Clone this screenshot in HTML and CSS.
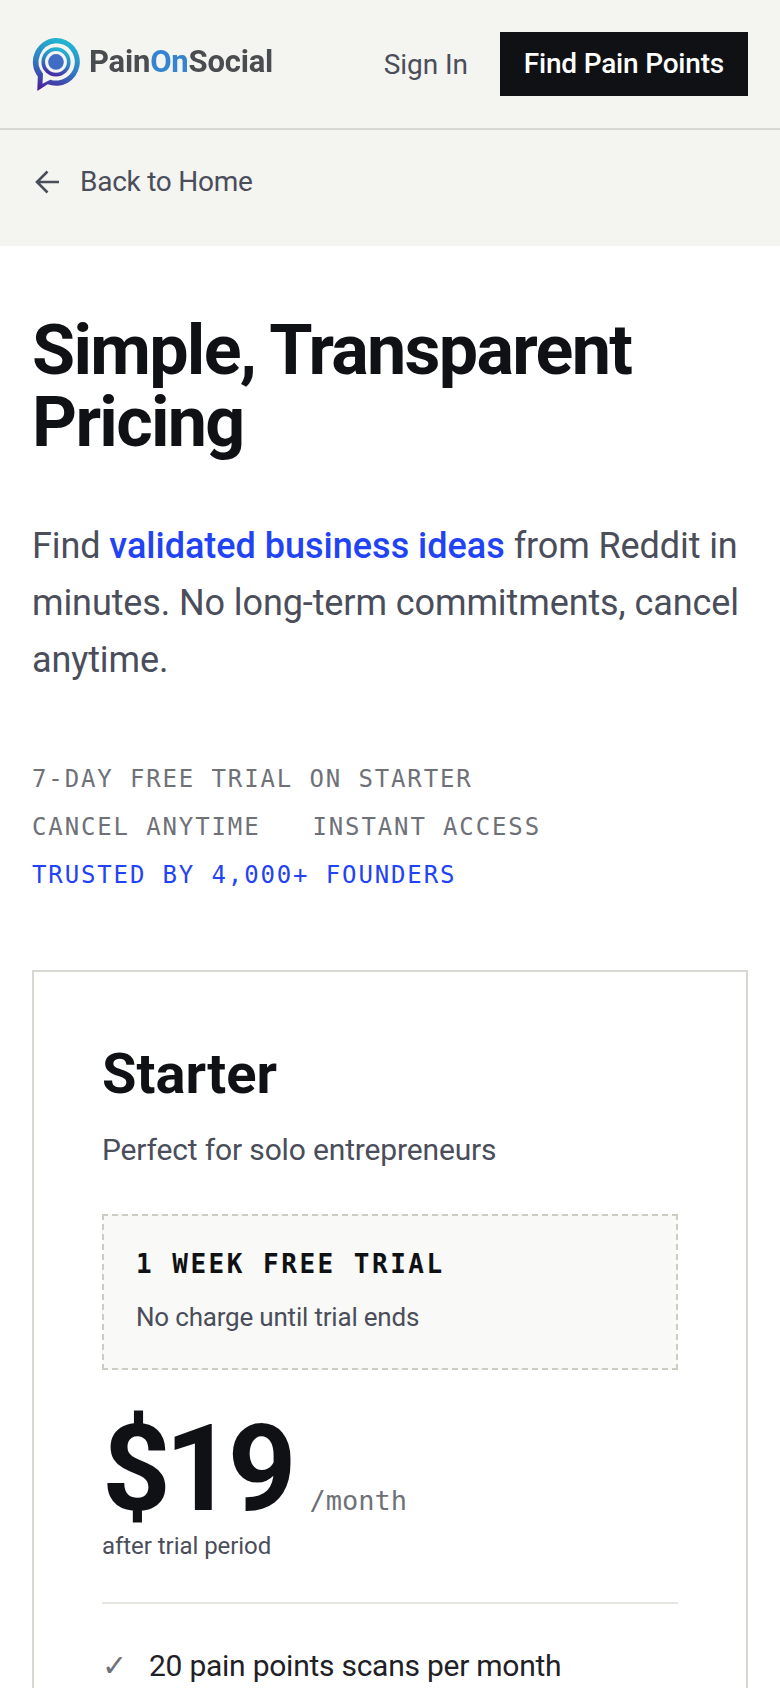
FILE: index.html
```html
<!DOCTYPE html>
<html lang="en">
<head>
  <meta charset="UTF-8" />
  <title>Pricing - PainOnSocial</title>
  <link rel="stylesheet" href="styles.css">
</head>
<body>
  <header class="topbar">
    <a class="logo" href="#">
      <svg class="logo-mark" width="48" height="53" viewBox="2 2 46 51">
        <defs>
          <linearGradient id="logoGrad" x1="0.6" y1="0" x2="0.3" y2="1">
            <stop offset="0" stop-color="#22b8d2" />
            <stop offset="0.5" stop-color="#2f7fc4" />
            <stop offset="1" stop-color="#4b1f9e" />
          </linearGradient>
        </defs>
        <path d="M25 2a23 23 0 1 1-8 44.600L7 53l0.500-14A23 23 0 0 1 25 2z" fill="url(#logoGrad)" />
        <path d="M25 7a18 18 0 1 1-5.500 35.100L12 46l0.500-9.500A18 18 0 0 1 25 7z" fill="#f4f4f0" />
        <circle cx="25" cy="25" r="14" fill="url(#logoGrad)" />
        <circle cx="25" cy="25" r="10.500" fill="#f4f4f0" />
        <circle cx="25" cy="25" r="7.500" fill="#3f6cc4" />
      </svg>
      <span class="logo-text">Pain<span class="logo-on">On</span>Social</span>
    </a>
    <nav class="topnav">
      <a class="signin" href="#">Sign In</a>
      <a class="find-btn" href="#">Find Pain Points</a>
    </nav>
  </header>

  <div class="backbar">
    <a class="back-link" href="#">
      <svg width="24" height="24" viewBox="0 0 24 24" fill="none" stroke="currentColor" stroke-width="2.6">
        <path d="M24 12H3M12.500 1.500L2 12l10.500 10.500" />
      </svg>
      Back to Home
    </a>
  </div>

  <main class="content">
    <h1>Simple, Transparent Pricing</h1>
    <p class="lead">Find <strong>validated business ideas</strong> from Reddit in minutes. No long-term commitments, cancel anytime.</p>

    <ul class="facts">
      <li>7-day free trial on Starter</li>
      <li>Cancel anytime</li>
      <li>Instant access</li>
      <li class="fact-blue">Trusted by 4,000+ founders</li>
    </ul>

    <section class="plan">
      <h2>Starter</h2>
      <p class="plan-desc">Perfect for solo entrepreneurs</p>
      <div class="trial">
        <div class="trial-title">1 Week Free Trial</div>
        <div class="trial-note">No charge until trial ends</div>
      </div>
      <div class="price">
        <span class="amount">$19</span>
        <span class="per">/month</span>
      </div>
      <p class="after">after trial period</p>
      <ul class="features">
        <li><span class="check">✓</span>20 pain points scans per month</li>
      </ul>
    </section>
  </main>
</body>
</html>
```

FILE: styles.css
```css
* {
  box-sizing: border-box;
}

html, body {
  height: 1688px;
  overflow: hidden;
}

body {
  margin: 0;
  font-family: Roboto, 'Noto Sans', sans-serif;
  background-color: #fff;
  color: #0f1114;
}

a {
  color: inherit;
  text-decoration: none;
}

ul {
  list-style: none;
  margin: 0;
  padding: 0;
}

.topbar {
  display: flex;
  align-items: center;
  justify-content: space-between;
  height: 130px;
  padding: 0 32px;
  background-color: #f4f4f0;
  border-bottom: 2px solid #d8d8d2;
}

.logo {
  display: flex;
  align-items: center;
  gap: 9px;
}

.logo-mark {
  display: block;
}

.logo-text {
  margin-bottom: 6px;
  font-size: 31px;
  font-weight: 700;
  letter-spacing: -0.2px;
  color: #4a4d50;
  filter: blur(0.5px);
}

.logo-on {
  color: #3484cf;
}

.topnav {
  display: flex;
  align-items: center;
  gap: 32px;
}

.signin {
  font-size: 28px;
  letter-spacing: -0.1px;
  color: #4a4d5a;
}

.find-btn {
  display: block;
  padding: 0 24px;
  line-height: 64px;
  font-size: 28px;
  font-weight: 500;
  letter-spacing: -0.2px;
  color: #fff;
  background-color: #0f1114;
}

.backbar {
  height: 116px;
  padding: 32px 32px 0;
  background-color: #f4f4f0;
}

.back-link {
  display: flex;
  align-items: center;
  gap: 21px;
  font-size: 28px;
  line-height: 40px;
  letter-spacing: -0.25px;
  color: #4a4d5a;
}

.back-link svg {
  margin-left: 3px;
}

.content {
  padding: 68px 32px 0;
}

h1 {
  margin: 0 0 60px;
  font-size: 70px;
  line-height: 72px;
  font-weight: 700;
  letter-spacing: -1.7px;
  color: #0f1114;
}

.lead {
  margin: 0 0 74px;
  font-size: 36px;
  line-height: 57px;
  letter-spacing: -0.1px;
  color: #4a4d5a;
}

.lead strong {
  font-weight: 500;
  letter-spacing: 0;
  color: #1f43f5;
}

.facts {
  display: flex;
  flex-wrap: wrap;
  gap: 16px 52px;
  margin-bottom: 79px;
  font-family: 'DejaVu Sans Mono', monospace;
  font-size: 24px;
  line-height: 32px;
  letter-spacing: 1.87px;
  text-transform: uppercase;
  color: #6f7178;
}

.facts li:first-child {
  width: 100%;
}

.facts .fact-blue {
  width: 100%;
  color: #1f43f5;
}

.plan {
  padding: 66px 68px;
  border: 2px solid #d8d8d2;
}

h2 {
  margin: 0 0 16px;
  font-size: 56px;
  line-height: 72px;
  font-weight: 700;
}

.plan-desc {
  margin: 0 0 40px;
  font-size: 30px;
  line-height: 48px;
  letter-spacing: -0.15px;
  color: #4a4d5a;
}

.trial {
  padding: 30px 32px 31px;
  background-color: #f9f9f7;
  border: 2px dashed #cccbc4;
}

.trial-title {
  font-family: 'DejaVu Sans Mono', monospace;
  font-size: 26px;
  font-weight: 700;
  line-height: 36px;
  letter-spacing: 2.5px;
  text-transform: uppercase;
}

.trial-note {
  margin-top: 15px;
  font-size: 26px;
  line-height: 40px;
  letter-spacing: -0.2px;
  color: #4a4d5a;
}

.price {
  display: flex;
  align-items: baseline;
  gap: 19px;
  margin-top: 39px;
}

.amount {
  font-size: 120px;
  line-height: 120px;
  font-weight: 700;
  letter-spacing: -6px;
}

.per {
  font-family: 'DejaVu Sans Mono', monospace;
  font-size: 27px;
  line-height: 40px;
  color: #6f7178;
}

.after {
  margin: 1px 0 0;
  font-size: 24px;
  line-height: 32px;
  letter-spacing: -0.05px;
  color: #4a4d5a;
}

.features {
  margin-top: 40px;
  padding-top: 40px;
  border-top: 2px solid #e6e6e0;
}

.features li {
  display: flex;
  align-items: center;
  font-size: 30px;
  line-height: 44px;
  letter-spacing: -0.25px;
  color: #1f2126;
}

.check {
  width: 47px;
  font-family: 'DejaVu Sans', sans-serif;
  font-size: 30px;
  color: #6f7178;
}
```
